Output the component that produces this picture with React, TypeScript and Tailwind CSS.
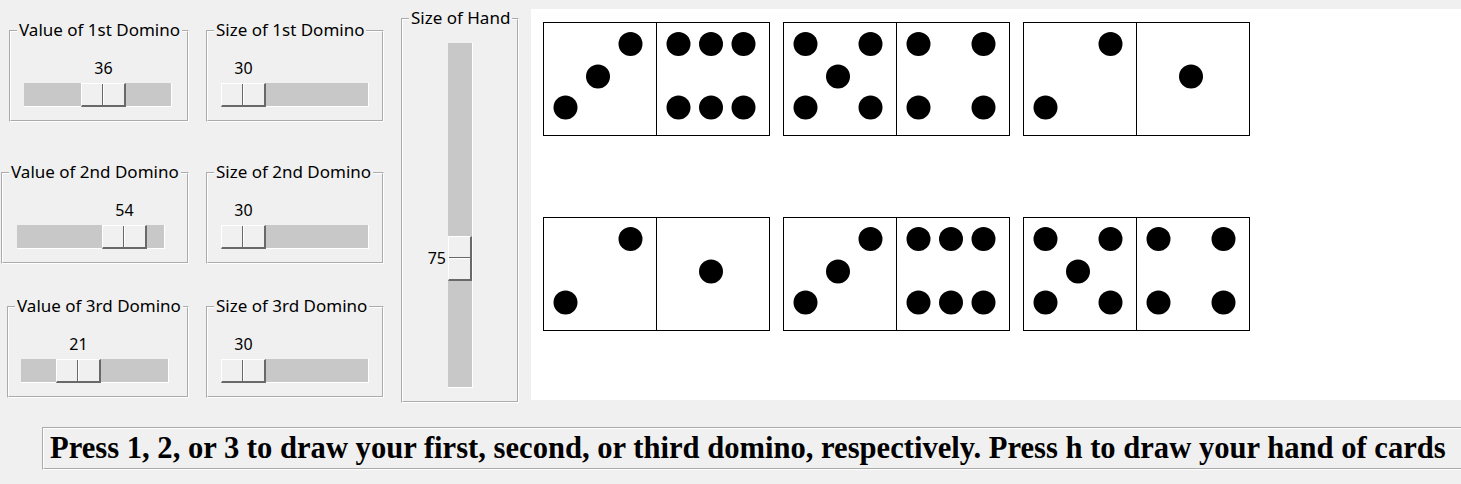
import React from 'react';

// pip layout on a 3x3 grid: [column, row]
const PIPS: Record<number, [number, number][]> = {
  1: [[1, 1]],
  2: [[2, 0], [0, 2]],
  3: [[2, 0], [1, 1], [0, 2]],
  4: [[0, 0], [2, 0], [0, 2], [2, 2]],
  5: [[0, 0], [2, 0], [1, 1], [0, 2], [2, 2]],
  6: [[0, 0], [1, 0], [2, 0], [0, 2], [1, 2], [2, 2]],
};
const PX = [22.5, 55, 87.5];
const PY = [22, 54.5, 85.5];

const Domino: React.FC<{ left: number; right: number }> = ({ left, right }) => (
  <svg width={227} height={114} viewBox="0 0 227 114" className="block shrink-0">
    <rect x={0.5} y={0.5} width={226} height={113} fill="#fff" stroke="#000" />
    <line x1={113.5} y1={0} x2={113.5} y2={114} stroke="#000" />
    {[left, right].map((v, half) =>
      PIPS[v].map(([c, r], i) => (
        <circle key={`${half}-${i}`} cx={half * 113 + PX[c]} cy={PY[r]} r={12} fill="#000" />
      ))
    )}
  </svg>
);

const Thumb: React.FC<{ vertical?: boolean }> = ({ vertical }) =>
  vertical ? (
    <div className="flex h-full w-full flex-col bg-[#f0f0f0] border-t border-l border-white border-b-2 border-r-2 border-b-[#696969] border-r-[#696969]">
      <div className="flex-1 border-b border-[#696969]" />
      <div className="flex-1 border-t border-white" />
    </div>
  ) : (
    <div className="flex h-full w-full bg-[#f0f0f0] border-t border-l border-white border-b-2 border-r-2 border-b-[#696969] border-r-[#696969]">
      <div className="flex-1 border-r border-[#696969]" />
      <div className="flex-1 border-l border-white" />
    </div>
  );

// horizontal Tk-style scale: value shown above the slider
const HScale: React.FC<{ value: number; pos: string; margin: string }> = ({ value, pos, margin }) => (
  <div className={`mt-[17px] w-[148px] ${margin}`}>
    <div className="relative h-[20px] leading-[20px]">
      <div className={`absolute top-0 w-[45px] text-center ${pos}`}>{value}</div>
    </div>
    <div className="relative mt-[5px] h-[24px] bg-[#c8c8c8] border-b border-r border-white">
      <div className={`absolute top-0 h-[24px] w-[45px] ${pos}`}>
        <Thumb />
      </div>
    </div>
  </div>
);

const Frame: React.FC<{ title: string; className: string; children: React.ReactNode }> = ({
  title,
  className,
  children,
}) => (
  <fieldset className={`border-2 [border-style:groove] border-white px-0 pb-[13px] ${className}`}>
    <legend className="ml-[6px] h-[20px] px-[2px] text-[17px] leading-[17px]">{title}</legend>
    {children}
  </fieldset>
);

export default function App() {
  const rows: [number, number][][] = [
    [[3, 6], [5, 4], [2, 1]],
    [[2, 1], [3, 6], [5, 4]],
  ];

  return (
    <div
      className="h-[484px] w-[1461px] overflow-hidden bg-[#f0f0f0] text-[16px] text-black"
      style={{ fontFamily: '"Noto Sans", "Open Sans", sans-serif' }}
    >
      <div className="flex h-[404px]">
        {/* values column */}
        <div className="flex w-[206px] shrink-0 flex-col">
          <Frame title="Value of 1st Domino" className="ml-[9px] mt-[21px] w-[180px]">
            <HScale value={36} pos="left-[57px]" margin="ml-[13px]" />
          </Frame>
          <Frame title="Value of 2nd Domino" className="ml-[1px] mt-[41px] w-[188px]">
            <HScale value={54} pos="left-[85px]" margin="ml-[14px]" />
          </Frame>
          <Frame title="Value of 3rd Domino" className="ml-[7px] mt-[33px] w-[182px]">
            <HScale value={21} pos="left-[35px]" margin="ml-[12px]" />
          </Frame>
        </div>

        {/* sizes column */}
        <div className="flex w-[195px] shrink-0 flex-col">
          <Frame title="Size of 1st Domino" className="mt-[21px] w-[178px]">
            <HScale value={30} pos="left-0" margin="ml-[13px]" />
          </Frame>
          <Frame title="Size of 2nd Domino" className="mt-[41px] w-[178px]">
            <HScale value={30} pos="left-0" margin="ml-[13px]" />
          </Frame>
          <Frame title="Size of 3rd Domino" className="mt-[33px] w-[178px]">
            <HScale value={30} pos="left-0" margin="ml-[13px]" />
          </Frame>
        </div>

        {/* hand size */}
        <div className="w-[130px] shrink-0">
          <fieldset className="mt-[9px] h-[394px] w-[118px] border-2 [border-style:groove] border-white px-0">
            <legend className="ml-[6px] h-[20px] px-[2px] text-[17px] leading-[17px]">Size of Hand</legend>
            <div className="relative ml-[45px] mt-[14px] h-[345px] w-[25px] bg-[#c8c8c8] border-b border-r border-white">
              <div className="absolute left-0 top-[193px] h-[45px] w-[24px]">
                <Thumb vertical />
                <div className="absolute right-full top-[12px] mr-[2px] leading-[20px]">75</div>
              </div>
            </div>
          </fieldset>
        </div>

        {/* canvas */}
        <div className="mt-[9px] flex h-[391px] flex-1 flex-col gap-[81px] bg-white pl-[12px] pt-[13px]">
          {rows.map((row, i) => (
            <div key={i} className="flex gap-[13px]">
              {row.map(([l, r], j) => (
                <Domino key={j} left={l} right={r} />
              ))}
            </div>
          ))}
        </div>
      </div>

      <div
        className="ml-[42px] mt-[23px] flex h-[43px] w-[1500px] items-center whitespace-nowrap border-2 [border-style:groove] border-white pl-[6px] text-[30.6px] font-bold"
        style={{ fontFamily: '"Liberation Serif", "Times New Roman", serif' }}
      >
        Press 1, 2, or 3 to draw your first, second, or third domino, respectively. Press h to draw your hand of cards
      </div>
    </div>
  );
}
